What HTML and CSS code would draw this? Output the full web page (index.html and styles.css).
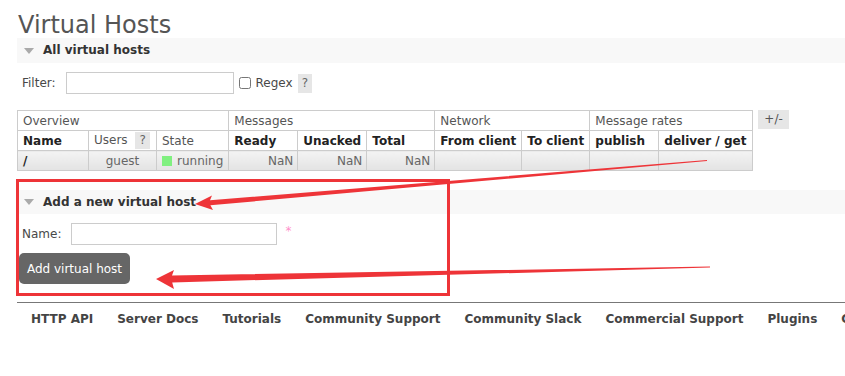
FILE: index.html
```html
<!DOCTYPE html>
<html lang="en">
<head>
  <meta charset="UTF-8" />
  <title>Virtual Hosts</title>
  <link rel="stylesheet" href="styles.css">
</head>
<body>
  <div class="page">
    <h1>Virtual Hosts</h1>

    <div class="section">
      <h2><span class="arrow-down"></span>All virtual hosts</h2>
      <div class="filter-row">
        <label>Filter:</label>
        <input type="text" class="filter-input">
        <input type="checkbox" class="regex-box">
        <span class="regex-label">Regex</span>
        <span class="help">?</span>
      </div>

      <div class="table-wrap">
        <table class="list">
          <thead>
            <tr class="group-row">
              <th colspan="3">Overview</th>
              <th colspan="3">Messages</th>
              <th colspan="2">Network</th>
              <th colspan="2">Message rates</th>
            </tr>
            <tr class="col-row">
              <th class="c-name">Name</th>
              <th class="c-users plain">Users <span class="help small">?</span></th>
              <th class="c-state plain">State</th>
              <th class="c-ready">Ready</th>
              <th class="c-unacked">Unacked</th>
              <th class="c-total">Total</th>
              <th class="c-from">From client</th>
              <th class="c-to">To client</th>
              <th class="c-pub">publish</th>
              <th class="c-del">deliver / get</th>
            </tr>
          </thead>
          <tbody>
            <tr class="data-row">
              <td class="vhost">/</td>
              <td class="center">guest</td>
              <td><span class="status-dot"></span>running</td>
              <td class="num">NaN</td>
              <td class="num">NaN</td>
              <td class="num">NaN</td>
              <td></td>
              <td></td>
              <td></td>
              <td></td>
            </tr>
          </tbody>
        </table>
        <span class="toggle-cols">+/-</span>
      </div>
    </div>

    <div class="section add-section">
      <h2><span class="arrow-down"></span>Add a new virtual host</h2>
      <div class="form-row">
        <label>Name:</label>
        <input type="text" class="name-input">
        <span class="mand">*</span>
      </div>
      <button class="btn">Add virtual host</button>
    </div>

    <div class="footer">
      <a>HTTP API</a>
      <a>Server Docs</a>
      <a>Tutorials</a>
      <a>Community Support</a>
      <a>Community Slack</a>
      <a>Commercial Support</a>
      <a>Plugins</a>
      <a>GitHub</a>
    </div>
  </div>

  <!-- red annotation drawn over the screenshot -->
  <svg class="marks" width="845" height="376" viewBox="0 0 845 376">
    <rect x="17.5" y="180.5" width="431" height="114" fill="none" stroke="#ee3438" stroke-width="3"/>
    <polygon fill="#ee3438" points="195,204 212,195.5 210,200.2 707,160 707,161 210.4,205.2 213,210"/>
    <polygon fill="#ee3438" points="156,279 174,270 172,275.4 710,266.6 710,267.6 172.2,282.4 174,289"/>
  </svg>
</body>
</html>
```

FILE: styles.css
```css
* {
  margin: 0;
  padding: 0;
  box-sizing: border-box;
}

html, body {
  width: 100%;
  height: 100%;
  background: white;
  overflow: hidden;
  font-family: "DejaVu Sans", Verdana, sans-serif;
  font-size: 12px;
  color: #484848;
}

.page {
  padding-left: 17px;
  width: 845px;
}

h1 {
  font-size: 24px;
  font-weight: normal;
  line-height: 26px;
  margin: 12px 0 0 1px;
  color: #555;
}

h2 {
  height: 25px;
  line-height: 25px;
  background: #f8f8f8;
  font-size: 12px;
  font-weight: bold;
  color: #333;
  display: flex;
  align-items: center;
}

.arrow-down {
  width: 0;
  height: 0;
  border-left: 5px solid transparent;
  border-right: 5px solid transparent;
  border-top: 6px solid #aaa;
  margin: 0 9px 0 7px;
}

.filter-row {
  display: flex;
  align-items: center;
  margin-top: 9px;
  height: 22px;
  padding-left: 5px;
}

.filter-row label {
  margin-right: 10px;
}

.filter-input {
  width: 168px;
  height: 22px;
  border: 1px solid #ccc;
}

.regex-box {
  width: 12px;
  height: 12px;
  margin: 0 5px 0 5px;
}

.regex-label {
  margin-right: 5px;
}

.help {
  display: inline-block;
  background: #e6e6e6;
  color: #666;
  padding: 0 4px;
  line-height: 19px;
}

.help.small {
  line-height: 17px;
  margin-left: 4px;
}

.table-wrap {
  display: flex;
  align-items: flex-start;
  margin-top: 16px;
}

.list {
  border-collapse: collapse;
  border: 1px solid #ccc;
}

.list th, .list td {
  border: 1px solid #ccc;
  height: 20px;
  padding: 0 5px;
  text-align: left;
  white-space: nowrap;
}

.group-row th {
  font-weight: normal;
  color: #555;
}

.col-row th {
  font-weight: bold;
  color: #222;
}

.col-row th.plain {
  font-weight: normal;
  color: #555;
}

.c-name { width: 71px; }
.c-users { width: 68px; }
.c-state { width: 72px; }
.c-ready { width: 69px; }
.c-unacked { width: 69px; }
.c-total { width: 68px; }
.c-from { width: 87px; }
.c-to { width: 68px; }
.c-pub { width: 69px; }
.c-del { width: 94px; }

.data-row td {
  background: linear-gradient(#f3f3f3, #e3e3e3);
  color: #666;
}

.data-row td.vhost {
  font-weight: bold;
  color: #222;
}

.data-row td.center {
  text-align: center;
}

.data-row td.num {
  text-align: right;
  padding-right: 4px;
}

.status-dot {
  display: inline-block;
  width: 10px;
  height: 10px;
  background: #80f080;
  margin-right: 5px;
  vertical-align: -1px;
}

.toggle-cols {
  background: #e6e6e6;
  color: #555;
  padding: 0 6px;
  line-height: 19px;
  margin-left: 5px;
}

.add-section {
  margin-top: 19px;
}

.add-section h2 {
  height: 24px;
}

.form-row {
  display: flex;
  align-items: center;
  margin-top: 9px;
  height: 22px;
  padding-left: 5px;
}

.form-row label {
  margin-right: 10px;
}

.name-input {
  width: 206px;
  height: 22px;
  border: 1px solid #ccc;
}

.mand {
  color: #f29;
  opacity: 0.5;
  margin-left: 8px;
  margin-top: -6px;
}

.btn {
  display: block;
  margin: 8px 0 0 2px;
  width: 111px;
  height: 31px;
  background: #666;
  color: white;
  border: none;
  border-radius: 5px;
  font-family: inherit;
  font-size: 12px;
}

.footer {
  margin-top: 18px;
  border-top: 1px solid #777;
  display: flex;
  gap: 24px;
  padding: 9px 0 0 14px;
  white-space: nowrap;
}

.footer a {
  font-size: 12px;
  font-weight: bold;
  color: #444;
}

.marks {
  position: absolute;
  top: 0;
  left: 0;
  pointer-events: none;
}
```
